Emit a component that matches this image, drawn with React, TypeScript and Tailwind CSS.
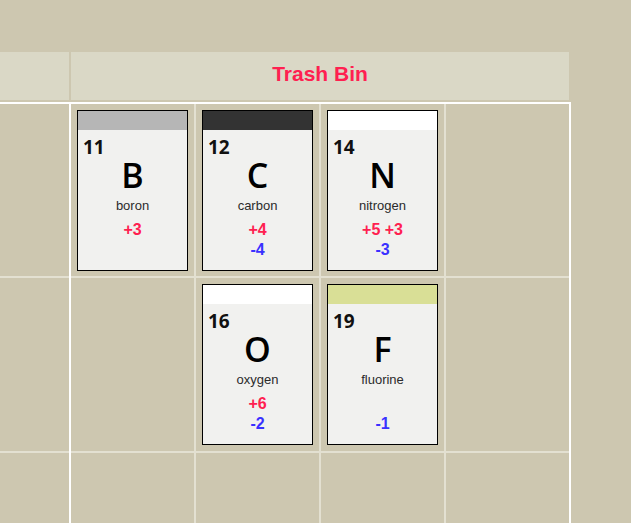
import React from "react";

type Element = {
  num: number;
  symbol: string;
  name: string;
  strip: string;
  plus: string;
  minus: string;
};

const rows: (Element | null)[][] = [
  [
    { num: 11, symbol: "B", name: "boron", strip: "bg-[#b6b6b6]", plus: "+3", minus: "" },
    { num: 12, symbol: "C", name: "carbon", strip: "bg-[#333333]", plus: "+4", minus: "-4" },
    { num: 14, symbol: "N", name: "nitrogen", strip: "bg-white", plus: "+5 +3", minus: "-3" },
    null,
  ],
  [
    null,
    { num: 16, symbol: "O", name: "oxygen", strip: "bg-white", plus: "+6", minus: "-2" },
    { num: 19, symbol: "F", name: "fluorine", strip: "bg-[#d9df96]", plus: "", minus: "-1" },
    null,
  ],
  [null, null, null, null],
];

const rowHeights = ["h-[172px]", "h-[173px]", "h-[172px]"];

function Card({ el }: { el: Element }) {
  return (
    <div className="w-[111px] h-[161px] border border-black bg-[#f1f1ef] flex flex-col">
      <div className={`h-[19px] shrink-0 ${el.strip}`}></div>
      <div className="mt-[7px] pl-[5px] text-[19px] leading-[20px] font-bold text-[#111] font-['Open_Sans',sans-serif]">
        {el.num}
      </div>
      <div className="mt-px text-center text-[34px] leading-[34px] font-semibold text-black font-['Open_Sans',sans-serif]">
        {el.symbol}
      </div>
      <div className="mt-[6px] text-center text-[13px] leading-[15px] text-[#2b2b2b] font-['Liberation_Sans',Arial,sans-serif]">
        {el.name}
      </div>
      <div className="mt-[7px] text-center text-[16px] leading-[20px] font-bold font-['Liberation_Sans',Arial,sans-serif]">
        <div className="h-[20px] text-[#ff2050]">{el.plus}</div>
        <div className="h-[20px] text-[#3a31ff]">{el.minus}</div>
      </div>
    </div>
  );
}

export default function App() {
  return (
    <div className="min-h-screen w-full bg-[#cdc7b0] pt-[52px] overflow-hidden">
      {/* Header */}
      <div className="flex h-[48px]">
        <div className="w-[69px] bg-[#dad8c6]"></div>
        <div className="w-[2px]"></div>
        <div className="w-[498px] bg-[#dad8c6] flex items-center justify-center pb-[4px]">
          <span className="text-[21px] font-bold text-[#ff2050] font-['Liberation_Sans',Arial,sans-serif]">
            Trash Bin
          </span>
        </div>
      </div>
      <div className="h-[2px]"></div>

      {/* Body */}
      <div className="w-[571px] border-t-2 border-white flex">
        <div className="w-[69px] flex flex-col gap-[2px] bg-[#e3e0d1]">
          {rows.map((_, i) => (
            <div key={i} className={`${rowHeights[i]} bg-[#cdc7b0]`}></div>
          ))}
        </div>
        <div className="w-[2px] bg-white"></div>
        <div className="w-[500px] border-r-2 border-white flex flex-col gap-[2px] bg-[#e3e0d1]">
          {rows.map((row, i) => (
            <div key={i} className="grid grid-cols-4 gap-[2px]">
              {row.map((el, j) => (
                <div key={j} className={`${rowHeights[i]} bg-[#cdc7b0] flex items-center justify-center`}>
                  {el && <Card el={el} />}
                </div>
              ))}
            </div>
          ))}
        </div>
      </div>
    </div>
  );
}
